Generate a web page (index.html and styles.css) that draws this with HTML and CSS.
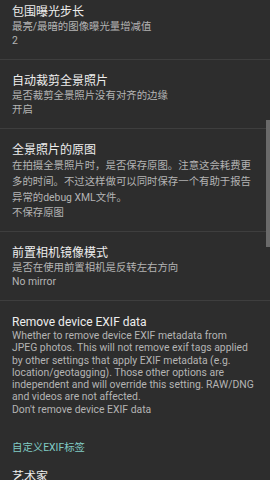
FILE: index.html
```html
<!DOCTYPE html>
<html lang="zh-CN">
<head>
  <meta charset="UTF-8">
  <title>设置</title>
  <link rel="stylesheet" href="styles.css">
</head>
<body>

  <div class="liste">

    <div class="ayar">
      <div class="baslik">包围曝光步长</div>
      <div class="aciklama">最亮/最暗的图像曝光量增减值</div>
      <div class="deger">2</div>
    </div>

    <div class="ayar">
      <div class="baslik">自动裁剪全景照片</div>
      <div class="aciklama">是否裁剪全景照片没有对齐的边缘</div>
      <div class="deger">开启</div>
    </div>

    <div class="ayar">
      <div class="baslik">全景照片的原图</div>
      <div class="aciklama uzun">在拍摄全景照片时，是否保存原图。注意这会耗费更多的时间。不过这样做可以同时保存一个有助于报告异常的debug XML文件。</div>
      <div class="deger">不保存原图</div>
    </div>

    <div class="ayar">
      <div class="baslik">前置相机镜像模式</div>
      <div class="aciklama">是否在使用前置相机是反转左右方向</div>
      <div class="deger">No mirror</div>
    </div>

    <div class="ayar ingilizce son">
      <div class="baslik">Remove device EXIF data</div>
      <div class="aciklama">Whether to remove device EXIF metadata from<br>JPEG photos. This will not remove exif tags applied by other settings that apply EXIF metadata (e.g. location/geotagging). Those other options are independent and will override this setting. RAW/DNG and videos are not affected.</div>
      <div class="deger">Don't remove device EXIF data</div>
    </div>

    <div class="kategori">自定义EXIF标签</div>

    <div class="ayar">
      <div class="baslik">艺术家</div>
    </div>

  </div>

  <div class="kaydirma"></div>

</body>
</html>
```

FILE: styles.css
```css
html, body {
  margin: 0;
  height: 100%;
  overflow: hidden;
}
body {
  font-family: Roboto, "Noto Sans CJK SC", sans-serif;
  background-color: #2d2d2d;
  color: #b4b4b4;
  position: relative;
}
.liste {
  margin-top: -9px;
}
.ayar {
  padding: 13px 12px 11px 12px;
  border-bottom: 1px solid #3e3e3e;
}
.ayar.son {
  border-bottom: none;
}
.baslik {
  font-size: 12px;
  line-height: 16px;
  color: #eeeeee;
}
.aciklama {
  font-size: 10.4px;
  line-height: 14px;
}
.aciklama.uzun {
  line-height: 16px;
}
.deger {
  font-size: 10.4px;
  line-height: 14px;
}
.ingilizce .aciklama,
.ingilizce .deger {
  line-height: 12.3px;
}
.kategori {
  padding: 13px 12px 0 12px;
  font-size: 10.4px;
  line-height: 16px;
  color: #80cbc4;
}
.kaydirma {
  position: absolute;
  right: 0;
  top: 120px;
  width: 4px;
  height: 127px;
  background-color: #6a6a6a;
}
```
